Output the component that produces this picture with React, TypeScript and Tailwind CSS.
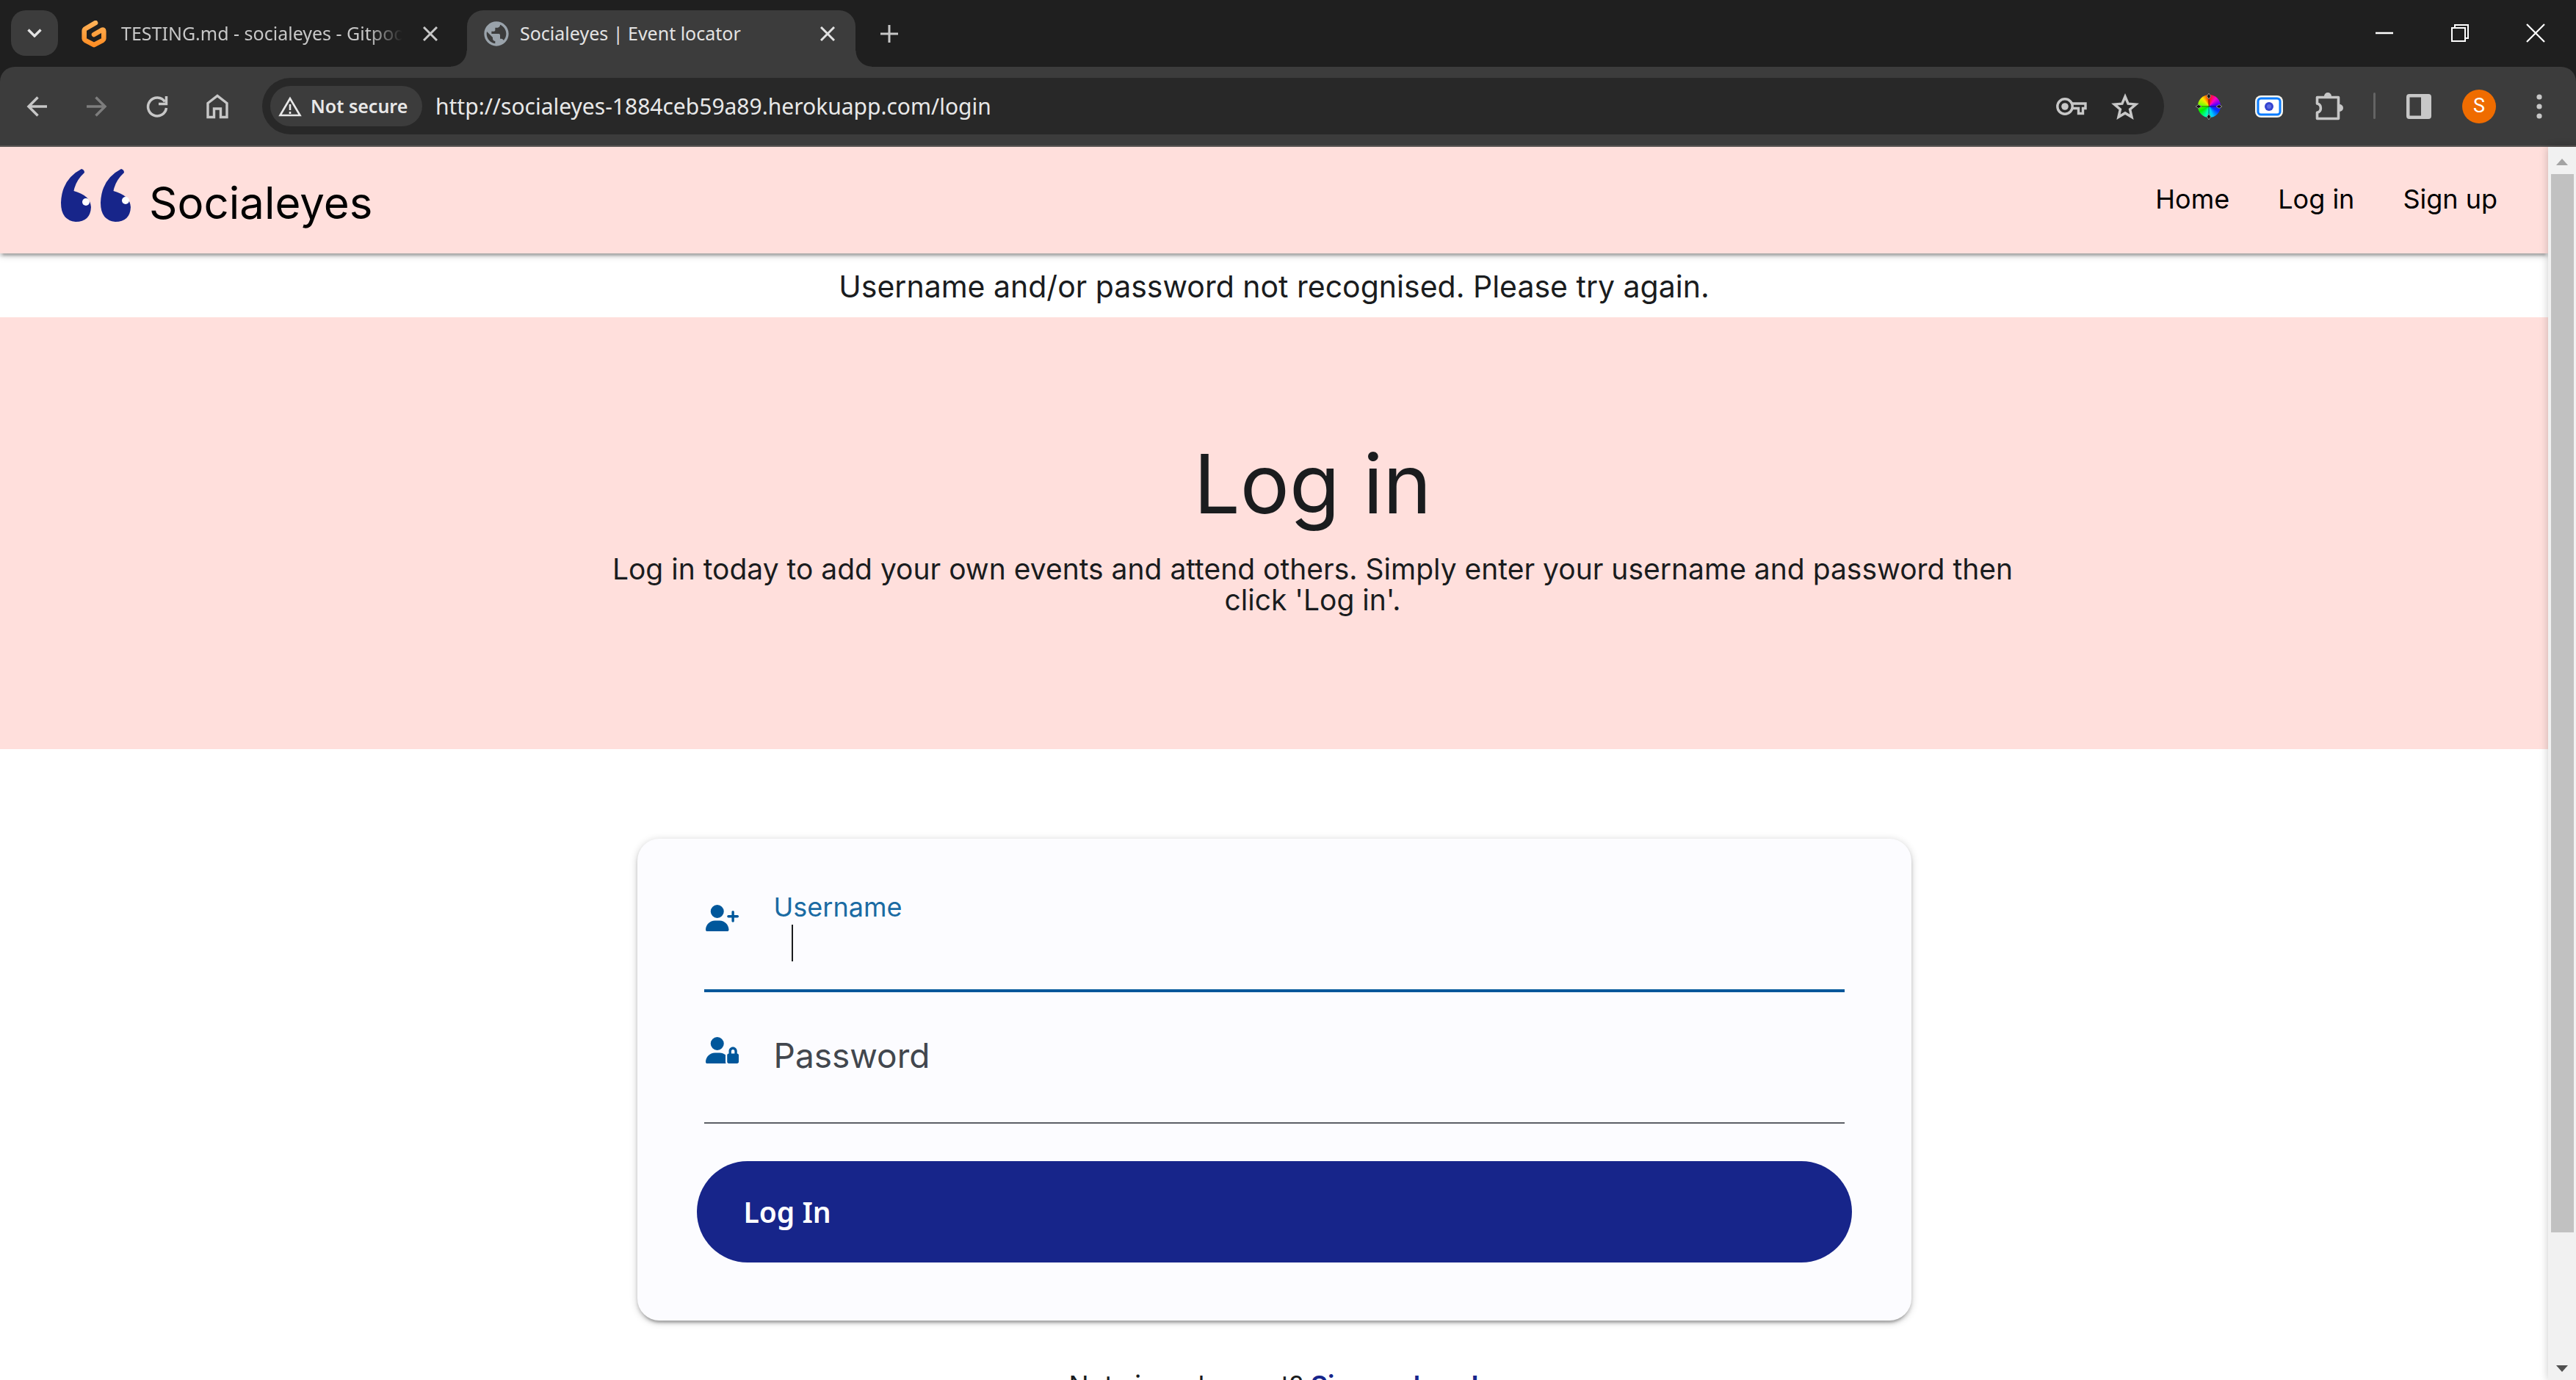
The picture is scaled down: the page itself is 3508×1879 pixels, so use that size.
import React from "react";
import { FaUserPlus, FaUserLock } from "react-icons/fa6";
import { MdPublic } from "react-icons/md";

function CloseGlyph() {
  return (
    <svg viewBox="0 0 20 20" className="size-5" fill="none" stroke="currentColor" strokeWidth="3">
      <path d="M1 1l18 18M19 1L1 19" />
    </svg>
  );
}

function GitpodLogo() {
  return (
    <svg viewBox="0 0 34 37" className="h-[37px] w-[34px] shrink-0" fill="none">
      <defs>
        <linearGradient id="gitpod" x1="0" y1="0" x2="0" y2="37" gradientUnits="userSpaceOnUse">
          <stop offset="0" stopColor="#ffb45b" />
          <stop offset="1" stopColor="#ff8a1f" />
        </linearGradient>
      </defs>
      <path
        d="M19 3.2L5.5 11Q3.7 12 3.7 14V24.5Q3.7 26 5 26.8L17 33.2L29 26.8Q30.3 26 30.3 24.5V14.5Q30.3 11.5 27.5 13L17 19"
        stroke="url(#gitpod)"
        strokeWidth="6.6"
        strokeLinecap="round"
        strokeLinejoin="round"
      />
    </svg>
  );
}

function TabStrip() {
  return (
    <div className="flex h-[91px] items-start bg-[#1f1f1f] pt-3.5 text-[#c7c7c7]">
      <button aria-label="Search tabs" className="ml-[15px] flex h-[62px] w-16 items-center justify-center rounded-[20px] bg-[#3c3c3c] text-[#e3e3e3]">
        <svg viewBox="0 0 20 12" className="h-3 w-5" fill="none" stroke="currentColor" strokeWidth="3.4">
          <path d="M1.5 1.5L10 10l8.500-8.500" />
        </svg>
      </button>
      <div className="flex h-16 w-[557px] items-center pr-10 pl-8">
        <GitpodLogo />
        <span className="ml-5 flex-1 overflow-hidden text-[25px] whitespace-nowrap [mask-image:linear-gradient(to_right,black_88%,transparent)]">
          TESTING.md - socialeyes - Gitpod
        </span>
        <button aria-label="Close tab" className="ml-7">
          <CloseGlyph />
        </button>
      </div>
      <div className="relative flex h-[77px] w-[529px] items-start rounded-t-[22px] bg-[#3c3c3c] pr-7 pl-5 text-[#e3e3e3]">
        <span className="absolute bottom-0 -left-[22px] size-[22px] bg-[radial-gradient(circle_at_top_left,transparent_21px,#3c3c3c_22px)]" />
        <span className="absolute -right-[22px] bottom-0 size-[22px] bg-[radial-gradient(circle_at_top_right,transparent_21px,#3c3c3c_22px)]" />
        <div className="flex h-16 flex-1 items-center">
          <MdPublic className="size-10 shrink-0 text-[#9aa3ab]" />
          <span className="ml-3 flex-1 text-[25px] whitespace-nowrap">Socialeyes | Event locator</span>
          <button aria-label="Close tab">
            <CloseGlyph />
          </button>
        </div>
      </div>
      <button aria-label="New tab" className="ml-8 flex h-16 w-7 items-center justify-center">
        <svg viewBox="0 0 24 24" className="size-6 shrink-0" fill="none" stroke="currentColor" strokeWidth="3">
          <path d="M12 0v24M0 12h24" />
        </svg>
      </button>
      <div className="mr-1 ml-auto flex text-white">
        <button aria-label="Minimize" className="flex h-[62px] w-[103px] items-center justify-center">
          <svg viewBox="0 0 26 26" className="size-[26px]" stroke="currentColor" strokeWidth="2.500">
            <path d="M1 13h24" />
          </svg>
        </button>
        <button aria-label="Restore" className="flex h-[62px] w-[103px] items-center justify-center">
          <svg viewBox="0 0 26 26" className="size-[26px]" fill="none" stroke="currentColor" strokeWidth="2">
            <path d="M2 6h18v18H2zM6 6V2h18v18h-4" />
          </svg>
        </button>
        <button aria-label="Close window" className="flex h-[62px] w-[103px] items-center justify-center">
          <svg viewBox="0 0 26 26" className="size-[26px]" stroke="currentColor" strokeWidth="2.200">
            <path d="M1 1l24 24M25 1L1 25" />
          </svg>
        </button>
      </div>
    </div>
  );
}

function ToolButton({ label, className = "", children }: { label: string; className?: string; children: React.ReactNode }) {
  return (
    <button aria-label={label} className={`flex h-[77px] w-[82px] shrink-0 items-center justify-center ${className}`}>
      {children}
    </button>
  );
}

function Toolbar() {
  return (
    <div className="bg-[#1f1f1f]">
      <div className="flex h-[109px] items-start rounded-t-[20px] border-b-2 border-[#5a5654] bg-[#3c3c3c] px-[9px] pt-[15px] text-[#c7c7c7]">
        <ToolButton label="Back">
          <svg viewBox="0 0 28 28" className="size-7" fill="none" stroke="currentColor" strokeWidth="3.500">
            <path d="M28 14H3M15.500 1.500L3 14l12.500 12.500" />
          </svg>
        </ToolButton>
        <ToolButton label="Forward" className="text-[#7d7d7d]">
          <svg viewBox="0 0 28 28" className="size-7" fill="none" stroke="currentColor" strokeWidth="3.500">
            <path d="M0 14h25M12.500 1.500L25 14 12.500 26.500" />
          </svg>
        </ToolButton>
        <ToolButton label="Reload">
          <svg viewBox="0 0 30 30" className="size-[30px]" fill="none" stroke="currentColor" strokeWidth="3.500">
            <path d="M27.500 17A12.500 12.500 0 1 1 25.500 8.500M27.500 1v10.500H17" />
          </svg>
        </ToolButton>
        <ToolButton label="Home">
          <svg viewBox="0 0 30 34" className="h-[34px] w-[30px]" fill="none" stroke="currentColor" strokeWidth="3.400">
            <path d="M2 12.500L15 2.500l13 10V31.500h-8.500V20h-9v11.500H2z" />
          </svg>
        </ToolButton>
        <div className="ml-5 flex h-[77px] flex-1 items-center rounded-full bg-[#282828] pr-[17px] pl-[11px]">
          <button className="flex h-[55px] w-[207px] shrink-0 items-center rounded-full bg-[#3c3c3c] pl-[11px] text-[25px] font-semibold whitespace-nowrap text-[#e8e8e8]">
            <svg viewBox="0 0 32 28" className="mr-3 h-7 w-8 shrink-0" fill="none" stroke="currentColor" strokeWidth="2.600">
              <path d="M16 3L2.500 26h27z" />
              <path d="M16 11v8M16 21v3" />
            </svg>
            Not secure
          </button>
          <input
            aria-label="Address"
            defaultValue="http://socialeyes-1884ceb59a89.herokuapp.com/login"
            className="ml-[18px] min-w-0 flex-1 bg-transparent text-[30px] text-[#e8e8e8] outline-none"
          />
          <button aria-label="Passwords" className="flex w-[73px] justify-center">
            <svg viewBox="0 0 42 26" className="h-[26px] w-[42px]" fill="none" stroke="currentColor" strokeWidth="3.400">
              <circle cx="12" cy="13" r="10.200" />
              <circle cx="12" cy="13" r="4.800" fill="currentColor" stroke="none" />
              <path d="M21.500 9H40v6.500h-3.500v7h-6v-7h-9" />
            </svg>
          </button>
          <button aria-label="Bookmark" className="flex w-[73px] justify-center">
            <svg viewBox="0 0 38 36" className="h-9 w-[38px]" fill="none" stroke="currentColor" strokeWidth="3.500">
              <path d="M19 4.500l4.100 9.700 10.500.9-8 6.900 2.400 10.300-9-5.400-9 5.400L12.400 22l-8-6.900 10.500-.9z" />
            </svg>
          </button>
        </div>
        <ToolButton label="Color picker" className="ml-5">
          <span className="relative flex size-[38px] items-center justify-center">
            <span className="size-[31px] rounded-full bg-[conic-gradient(#ff1a00,#ff00c8,#4b00ff,#0033ff,#00c8ff,#00ffb0,#00f000,#7dff00,#ffe600,#ff1a00)]" />
            <svg viewBox="0 0 38 38" className="absolute inset-0 size-[38px]" fill="none" stroke="#111" strokeWidth="1">
              <path d="M19 9v20M9 19h20" strokeOpacity="0.6" />
              <g fill="#111" stroke="#8a8a8a" strokeWidth="1">
                <path d="M19 1l2.500 4L19 9l-2.500-4zM19 29l2.500 4L19 37l-2.500-4zM1 19l4-2.500L9 19l-4 2.500zM29 19l4-2.500L37 19l-4 2.500z" />
              </g>
            </svg>
          </span>
        </ToolButton>
        <ToolButton label="Screen recorder">
          <svg viewBox="0 0 38 30" className="h-[30px] w-[38px]">
            <rect width="38" height="30" rx="8" fill="#f4f4ee" />
            <rect x="4" y="4" width="30" height="22" rx="4" fill="#fff" stroke="#0a7cff" strokeWidth="3" />
            <circle cx="19" cy="15" r="6" fill="#3443d0" />
            <circle cx="19" cy="15" r="3" fill="#5c6ae0" />
          </svg>
        </ToolButton>
        <ToolButton label="Extensions">
          <svg viewBox="0 0 38 38" className="size-[38px]" fill="none" stroke="currentColor" strokeWidth="3.600" strokeLinejoin="round">
            <path d="M2.500 6.500h29v29h-29v-8.200c6.500-1.500 6.500-10.800 0-12.300z" />
            <path d="M12 5a5 5 0 0 1 10 0zM33 16a5 5 0 0 1 0 10z" fill="currentColor" stroke="none" />
          </svg>
        </ToolButton>
        <span className="mt-5 mr-[18px] ml-[19px] h-9 w-[3px] rounded-full bg-[#646464]" />
        <ToolButton label="Side panel">
          <svg viewBox="0 0 34 34" className="size-[34px]">
            <path fill="currentColor" fillRule="evenodd" d="M4 0h26q4 0 4 4v26q0 4-4 4H4q-4 0-4-4V4q0-4 4-4zm.500 4.500v25H20v-25z" />
          </svg>
        </ToolButton>
        <ToolButton label="Profile">
          <span className="flex size-[46px] items-center justify-center rounded-full bg-[#ef6c00] font-['Roboto',sans-serif] text-[27px] text-white">S</span>
        </ToolButton>
        <ToolButton label="Menu">
          <svg viewBox="0 0 8 34" className="h-[34px] w-2" fill="currentColor">
            <circle cx="4" cy="4" r="3.600" />
            <circle cx="4" cy="17" r="3.600" />
            <circle cx="4" cy="30" r="3.600" />
          </svg>
        </ToolButton>
      </div>
    </div>
  );
}

function SiteHeader() {
  return (
    <header className="relative flex h-[145px] items-center justify-between bg-[#ffdfdc] pr-[69px] pb-1 pl-[82px] shadow-[0_4px_4px_rgba(0,0,0,0.14),0_7px_2px_-4px_rgba(0,0,0,0.12),0_2px_11px_rgba(0,0,0,0.2)]">
      <a href="#home" className="flex items-start gap-[25px]">
        <svg viewBox="0 0 96 72" className="h-[72px] w-24">
          <g fill="#17258a">
            <path d="M29 0Q33 1 33 5Q21 16 18.500 30Q41 36 42 52Q41 72 21 72Q1 70 1 46Q2 14 29 0z" />
            <path d="M83 0Q87 1 87 5Q75 16 72.500 30Q95 36 96 52Q95 72 75 72Q55 70 55 46Q56 14 83 0z" />
          </g>
          <circle cx="35" cy="45" r="5" fill="#fff" />
          <circle cx="89" cy="43" r="5" fill="#fff" />
        </svg>
        <span className="mt-2.5 text-[60px] leading-[72px] text-black">Socialeyes</span>
      </a>
      <nav className="flex gap-[66px] text-[36px] text-black">
        <a href="#home">Home</a>
        <a href="#login">Log in</a>
        <a href="#signup">Sign up</a>
      </nav>
    </header>
  );
}

function LoginCard() {
  return (
    <form
      onSubmit={(e) => e.preventDefault()}
      className="mx-auto mt-[122px] w-1/2 rounded-[30px] bg-[#fcfcff] px-[81px] pt-[69px] pb-[79px] shadow-[0_4px_4px_rgba(0,0,0,0.14),0_7px_2px_-4px_rgba(0,0,0,0.12),0_2px_11px_rgba(0,0,0,0.2)]"
    >
      <div className="mx-2.5 flex h-[140px] gap-12 border-b-4 border-[#00579b] pl-0.5">
        <FaUserPlus className="mt-[21px] h-9 w-[45px] shrink-0 text-[#00579b]" />
        <div className="relative flex flex-1 flex-col">
          <label htmlFor="username" className="text-[36px] leading-[48px] text-[#1a6ba3]">
            Username
          </label>
          <input id="username" className="h-[50px] w-full bg-transparent px-[26px] text-[36px] caret-transparent outline-none" />
          <span className="absolute top-12 left-6 h-[50px] w-0.5 bg-[#1a1c1e]" />
        </div>
      </div>
      <div className="mx-2.5 mt-10 flex h-[139px] gap-12 border-b-2 border-[#5c5f66] pl-0.5">
        <FaUserLock className="mt-[21px] h-9 w-[45px] shrink-0 text-[#00579b]" />
        <div className="grid flex-1">
          <label htmlFor="password" className="col-start-1 row-start-1 mt-3.5 self-start text-[46px] leading-[64px] text-[#42474e]">
            Password
          </label>
          <input id="password" type="password" className="col-start-1 row-start-1 w-full bg-transparent px-[26px] outline-none" />
        </div>
      </div>
      <button type="submit" className="mt-[51px] flex h-[138px] w-full items-center rounded-full bg-[#17258a] px-16 font-['Noto_Sans',sans-serif] text-[39px] font-semibold text-white">
        Log In
      </button>
    </form>
  );
}

function Scrollbar() {
  return (
    <div className="relative flex w-[38px] shrink-0 flex-col items-center bg-[#f1f1f1] shadow-[0_0_12px_rgba(0,0,0,0.22)]">
      <svg viewBox="0 0 16 9" className="mt-4 h-[9px] w-4 shrink-0" fill="#a3a3a3">
        <path d="M0 9l8-9 8 9z" />
      </svg>
      <div className="mt-3 mb-[181px] w-[31px] flex-1 bg-[#c1c1c1]" />
      <svg viewBox="0 0 16 9" className="mb-[11px] h-[9px] w-4 shrink-0" fill="#505050">
        <path d="M0 0l8 9 8-9z" />
      </svg>
    </div>
  );
}

export default function App() {
  return (
    <div className="flex h-screen flex-col overflow-hidden bg-white font-['Noto_Sans',sans-serif]">
      <TabStrip />
      <Toolbar />
      <div className="flex min-h-0 flex-1">
        <main className="min-w-0 flex-1 overflow-hidden font-['Inter',sans-serif] text-[#1a1c1e]">
          <SiteHeader />
          <p className="pt-[18px] pb-3.5 text-center text-[41px] leading-[55px]">Username and/or password not recognised. Please try again.</p>
          <section className="flex h-[588px] flex-col items-center bg-[#ffdfdc] pl-[105px] text-center">
            <h1 className="mt-[156px] text-[112px] leading-[140px]">Log in</h1>
            <p className="mt-[26px] max-w-[1950px] text-[39px] leading-[42px]">
              Log in today to add your own events and attend others. Simply enter your username and password then click 'Log in'.
            </p>
          </section>
          <LoginCard />
          <p className="mt-16 text-center text-[36px] leading-[48px]">
            Not signed up yet?{" "}
            <a href="#signup" className="font-semibold text-[#17258a]">
              Sign up here!
            </a>
          </p>
        </main>
        <Scrollbar />
      </div>
    </div>
  );
}
